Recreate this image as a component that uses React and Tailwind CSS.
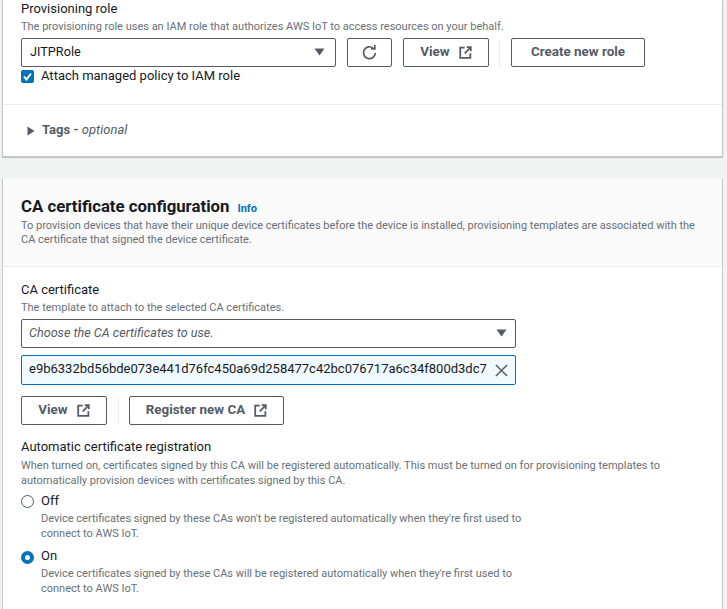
import React from 'react';

const External = () => (
  <svg width="13" height="13" viewBox="0 0 16 16" fill="none" stroke="#545b64" strokeWidth="2.2" className="shrink-0">
    <path d="M7 2H1.5v12.5H14V9" />
    <path d="M9.5 1.5h5v5" />
    <path d="M14 2L7 9" />
  </svg>
);

const Caret = () => (
  <svg width="11" height="8" viewBox="0 0 11 8" className="shrink-0">
    <path d="M0.5 0.5h10L5.5 7.5z" fill="#545b64" />
  </svg>
);

const Btn = ({ w, children }) => (
  <div className={`${w} h-[29px] shrink-0 border border-[#545b64] rounded-[2px] bg-white flex items-center justify-center gap-[9px] text-[13.4px] font-bold text-[#545b64] pb-[1px]`}>
    {children}
  </div>
);

const Divider = ({ className }) => <div className={`w-px h-[26px] bg-[#eaeded] shrink-0 ${className}`} />;

const RadioRow = ({ label, on, children }) => (
  <div className="flex gap-[7px]">
    {on ? (
      <div className="w-[13px] h-[13px] mt-[5px] rounded-full border-[4px] border-[#0073bb] bg-white shrink-0" />
    ) : (
      <div className="w-[13px] h-[13px] mt-[4px] rounded-full border border-[#545b64] bg-white shrink-0" />
    )}
    <div>
      <div className="text-[13px] leading-[20px] text-[#16191f]">{label}</div>
      <div className="text-[11px] leading-[15px] text-[#687078] w-[490px]">{children}</div>
    </div>
  </div>
);

export default function App() {
  return (
    <div className="w-[727px] h-[609px] overflow-hidden bg-[#f2f3f3] pl-[2px] pr-[4px] font-['Roboto',sans-serif]">
      <div className="bg-white border-x border-b border-[#c4c8c8] h-[157px] shadow-[0_1px_1px_rgba(0,28,36,0.2)]">
        <div className="pl-[18px] pt-[1px] h-[105px] border-b border-[#eaeded]">
          <div className="text-[13px] leading-[16px] text-[#16191f]">Provisioning role</div>
          <div className="text-[11px] leading-[16px] text-[#687078] mt-[2px]">The provisioning role uses an IAM role that authorizes AWS IoT to access resources on your behalf.</div>
          <div className="flex items-center mt-[3px]">
            <div className="w-[315px] h-[29px] border border-[#545b64] rounded-[2px] flex items-center justify-between pl-[8px] pr-[10px] text-[12.7px] text-[#16191f] pb-[2px]">
              JITPRole
              <Caret />
            </div>
            <div className="ml-[11px]">
              <Btn w="w-[45px]">
                <svg width="17" height="17" viewBox="0 0 16 16" fill="none" stroke="#545b64" strokeWidth="1.6">
                  <path d="M13.5 8.5a5.6 5.6 0 1 1-2-4.6" />
                  <path d="M13 1v3.6H9.5" />
                </svg>
              </Btn>
            </div>
            <div className="ml-[11px]">
              <Btn w="w-[86px]">View <External /></Btn>
            </div>
            <Divider className="ml-[10px]" />
            <div className="ml-[11px]">
              <Btn w="w-[134px]">Create new role</Btn>
            </div>
          </div>
          <div className="flex items-center gap-[7px]">
            <div className="w-[13px] h-[13px] rounded-[2px] bg-[#0073bb] flex items-center justify-center">
              <svg width="11" height="11" viewBox="0 0 11 11" fill="none" stroke="#fff" strokeWidth="2">
                <path d="M2 5.5l2.5 3L9 2.5" />
              </svg>
            </div>
            <span className="text-[13px] leading-[18px] text-[#16191f]">Attach managed policy to IAM role</span>
          </div>
        </div>
        <div className="pl-[24px] pt-[15px] flex items-center gap-[7px] text-[13px] leading-[20px] text-[#545b64]">
          <svg width="8" height="10" viewBox="0 0 8 10" className="mt-[2px] shrink-0"><path d="M0.5 0.5l7 4.5-7 4.5z" fill="#545b64" /></svg>
          <span><b className="font-bold">Tags -</b> <i>optional</i></span>
        </div>
      </div>

      <div className="mt-[22px] bg-white border-x border-[#c4c8c8] h-[440px]">
        <div className="bg-[#fafafa] h-[88px] border-b border-[#eaeded] pl-[18px] pt-[17px]">
          <div className="flex items-baseline gap-[8px]">
            <span className="text-[16.8px] leading-[20px] font-bold text-[#16191f]">CA certificate configuration</span>
            <span className="text-[11px] font-bold text-[#0073bb]">Info</span>
          </div>
          <div className="text-[11px] leading-[14px] text-[#687078] mt-[1px] pr-[10px]">To provision devices that have their unique device certificates before the device is installed, provisioning templates are associated with the CA certificate that signed the device certificate.</div>
        </div>
        <div className="pl-[18px] pt-[14px]">
          <div className="text-[13px] leading-[18px] text-[#16191f]">CA certificate</div>
          <div className="text-[11px] leading-[16px] text-[#687078] mt-[1px]">The template to attach to the selected CA certificates.</div>
          <div className="w-[495px] h-[29px] mt-[3px] border border-[#545b64] rounded-[2px] flex items-center justify-between pl-[7px] pr-[8px] text-[12.6px] italic text-[#545b64] pb-[1px]">
            Choose the CA certificates to use.
            <Caret />
          </div>
          <div className="w-[495px] h-[30px] mt-[7px] border border-[#0073bb] rounded-[2px] bg-[#f1faff] flex items-center justify-between pl-[7px] pr-[7px] text-[13px] text-[#16191f]">
            <span className="pb-[2px]">e9b6332bd56bde073e441d76fc450a69d258477c42bc076717a6c34f800d3dc7</span>
            <svg width="13" height="13" viewBox="0 0 14 14" stroke="#545b64" strokeWidth="1.6" className="shrink-0"><path d="M1 1l12 12M13 1L1 13" /></svg>
          </div>
          <div className="flex items-center mt-[11px]">
            <Btn w="w-[86px]">View <External /></Btn>
            <Divider className="ml-[11px]" />
            <div className="ml-[10px]">
              <Btn w="w-[155px]">Register new CA <External /></Btn>
            </div>
          </div>
          <div className="text-[13px] leading-[18px] text-[#16191f] mt-[13px]">Automatic certificate registration</div>
          <div className="text-[11px] leading-[15px] text-[#687078] mt-[2px] pr-[30px]">When turned on, certificates signed by this CA will be registered automatically. This must be turned on for provisioning templates to automatically provision devices with certificates signed by this CA.</div>
          <div className="mt-[3px] flex flex-col gap-[5px]">
            <RadioRow label="Off">Device certificates signed by these CAs won't be registered automatically when they're first used to connect to AWS IoT.</RadioRow>
            <RadioRow label="On" on>Device certificates signed by these CAs will be registered automatically when they're first used to connect to AWS IoT.</RadioRow>
          </div>
        </div>
      </div>
    </div>
  );
}
